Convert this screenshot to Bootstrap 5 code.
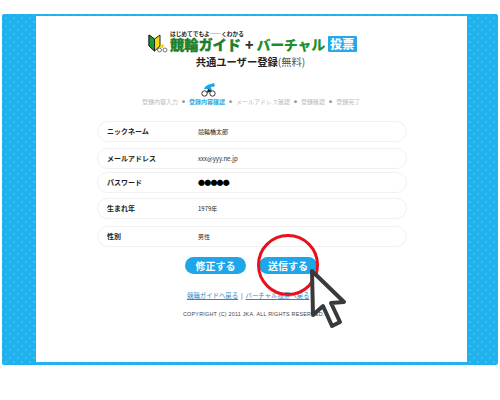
<!DOCTYPE html>
<html lang="ja">
<head>
<meta charset="utf-8">
<title>共通ユーザー登録</title>
<link href="https://cdn.jsdelivr.net/npm/bootstrap@5.3.0/dist/css/bootstrap.min.css" rel="stylesheet">
<style>
html,body{width:500px;height:400px;overflow:hidden;background:#fff}
body{font-family:"Noto Sans CJK JP","Liberation Sans",sans-serif;padding:14px 2px 0;position:relative;color:#222}
.frame{height:351px;background-color:#1fb2ee;background-image:radial-gradient(circle,#3dbcf0 1.1px,transparent 1.5px),radial-gradient(circle,#3dbcf0 1.1px,transparent 1.5px);background-size:8px 8px;background-position:0 0,4px 4px;border-radius:2px;padding:2px 31px 3px 34px}
.sheet{height:100%;background:#fff}
.logo-row{padding-top:15px;padding-left:112px;height:39px}
.leaf{width:20px;height:19px;margin-top:3px;margin-right:2px;flex:none}
.kicker{font-size:5.7px;font-weight:700;line-height:6px;height:6px;white-space:nowrap}
.brand{font-size:14.2px;font-weight:900;line-height:15px;color:#1c7f2c;white-space:nowrap;-webkit-text-stroke:.3px #1c7f2c}
.plus{font-size:14px;font-weight:900;color:#333;line-height:15px;margin:6px 0 0 1px}
.brand2{font-size:14px;font-weight:900;line-height:15px;color:#1c8f2c;margin:6px 0 0 3px;white-space:nowrap;letter-spacing:-.3px}
.tag{background:#27a8e8;color:#fff;font-size:12px;font-weight:900;line-height:16px;height:16px;width:29px;text-align:center;margin:5px 0 0 3px;border-radius:1px;align-self:flex-start}
.headline{font-size:10.3px;font-weight:700;line-height:14px;height:14px;text-align:center;margin-left:-2px;white-space:nowrap}
.headline span{font-weight:400;color:#555}
.cycle{display:block;width:15px;height:14px;margin:14px 0 0 165px}
.steps{font-size:6px;line-height:8px;color:#b9b9b9;padding-left:106px;white-space:nowrap;gap:4px;height:8px;margin:1px 0 15px}
.steps b{color:#27a8e8;font-weight:700}
.dot{color:#999;font-size:3px}
.pill{margin-left:61px;width:310px;height:21px;border:1px solid #f0f0f0;border-radius:11px;font-size:7px;line-height:19px;padding-left:9px}
.gap-a{margin-bottom:6px}.gap-b{margin-bottom:3px}.gap-c{margin-bottom:5px}.gap-d{margin-bottom:7px}
.pill-label{width:91px;font-weight:700;flex:none}
.pill-value{font-size:6px}
.blobs{font-size:7px;letter-spacing:-.8px;color:#000}
.actions{gap:13px;margin-top:10px;padding-left:149px}
.action{background:#1ea6ea;color:#fff;border:0;padding:0;height:17px;line-height:17px;font-size:10px;font-weight:700;border-radius:9px;text-align:center}
.w-left{width:61px}.w-right{width:58px}
.links{font-size:6.4px;line-height:10px;margin-top:17px;padding-left:151px;white-space:nowrap;color:#333}
.links a{color:#2b86c5}
.rights{font-family:"Liberation Sans",sans-serif;font-size:5.4px;line-height:8px;margin-top:9px;padding-left:147px;white-space:nowrap;color:#444;letter-spacing:.22px}
.ring{position:absolute;left:257px;top:234px;width:62px;height:62px}
.pointer{position:absolute;left:309px;top:268px;width:38px;height:62px}
</style>
</head>
<body>
<div class="frame">
  <div class="sheet overflow-hidden">
    <div class="logo-row d-flex">
      <svg class="leaf" viewBox="0 0 20 19"><path d="M1 1 6.500 5 12 1V12L6.500 17 1 12Z" fill="#f5d90a" stroke="#222"/><path d="M1 1 6.500 5V17L1 12Z" fill="#1c9a36" stroke="#222"/><circle cx="11.500" cy="16" r="2" fill="#fff" stroke="#555" stroke-width=".8"/><circle cx="17" cy="16" r="2" fill="#fff" stroke="#555" stroke-width=".8"/><path d="M11 14 14 10 16.500 11 15 14Z" fill="#f5d90a"/></svg>
      <div>
        <div class="kicker">はじめてでもよ――くわかる</div>
        <div class="brand">競輪ガイド</div>
      </div>
      <div class="plus">+</div>
      <div class="brand2">バーチャル</div>
      <div class="tag">投票</div>
    </div>
    <div class="headline">共通ユーザー登録<span>(無料)</span></div>
    <svg class="cycle" viewBox="0 0 15 14"><circle cx="3.500" cy="10.500" r="2.700" fill="none" stroke="#333"/><circle cx="11.500" cy="10.500" r="2.700" fill="none" stroke="#333"/><path d="M3 6 C4 3 7 1 12 1 L13 3 10 4 11 8 6 9 7 6Z" fill="#1ea6ea"/><path d="M10 1 13 0 14 3 12 4Z" fill="#1ea6ea"/><path d="M7 6 11 8 6 10Z" fill="#222"/></svg>
    <div class="steps d-flex align-items-center">
      <span>登録内容入力</span><span class="dot">●</span><b>登録内容確認</b><span class="dot">●</span><span>メールアドレス確認</span><span class="dot">●</span><span>登録確認</span><span class="dot">●</span><span>登録完了</span>
    </div>
    <div class="pill gap-a d-flex"><div class="pill-label">ニックネーム</div><div class="pill-value">競輪橋太郎</div></div>
    <div class="pill gap-b d-flex"><div class="pill-label">メールアドレス</div><div class="pill-value">xxx@yyy.ne.jp</div></div>
    <div class="pill gap-c d-flex"><div class="pill-label">パスワード</div><div class="pill-value blobs">●●●●●</div></div>
    <div class="pill gap-d d-flex"><div class="pill-label">生まれ年</div><div class="pill-value">1979年</div></div>
    <div class="pill d-flex"><div class="pill-label">性別</div><div class="pill-value">男性</div></div>
    <div class="actions d-flex">
      <button class="action w-left" type="button">修正する</button>
      <button class="action w-right" type="button">送信する</button>
    </div>
    <div class="links"><a href="#">競輪ガイドへ戻る</a> &nbsp;|&nbsp; <a href="#">バーチャル投票へ戻る</a></div>
    <div class="rights">COPYRIGHT (C) 2011 JKA. ALL RIGHTS RESERVED.</div>
  </div>
</div>
<svg class="ring" viewBox="0 0 62 62"><circle cx="31" cy="31" r="29.500" fill="none" stroke="#e8101c" stroke-width="3"/></svg>
<svg class="pointer" viewBox="0 0 38 62"><path d="M3 3 4 47 14 38 23 58 31 54 22 35 35 34Z" fill="#fff" stroke="#3a3a3a" stroke-width="4" stroke-linejoin="round"/></svg>
</body>
</html>
